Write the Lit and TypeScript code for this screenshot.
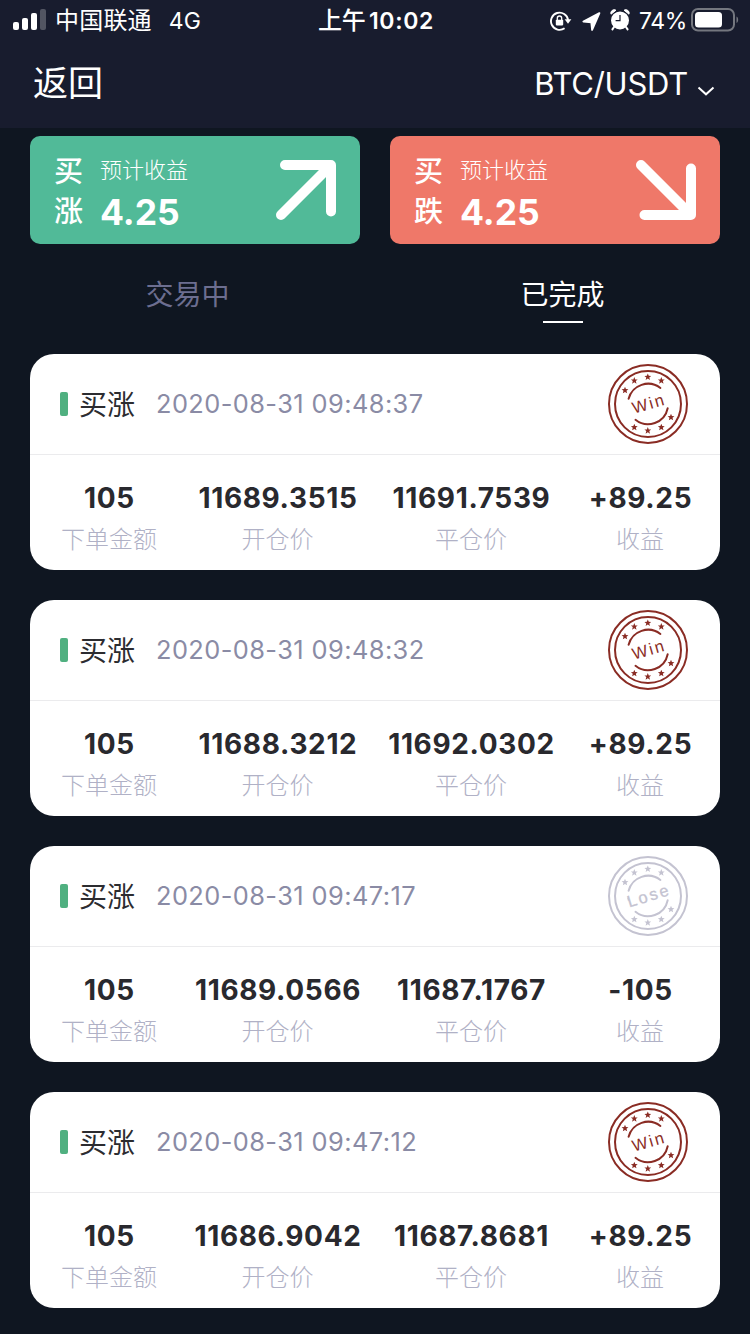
import { LitElement, css, html, svg } from 'lit'

type Result = 'win' | 'lose'

interface Order {
  time: string
  amount: string
  open: string
  close: string
  profit: string
  result: Result
}

const ORDERS: Order[] = [
  { time: '2020-08-31 09:48:37', amount: '105', open: '11689.3515', close: '11691.7539', profit: '+89.25', result: 'win' },
  { time: '2020-08-31 09:48:32', amount: '105', open: '11688.3212', close: '11692.0302', profit: '+89.25', result: 'win' },
  { time: '2020-08-31 09:47:17', amount: '105', open: '11689.0566', close: '11687.1767', profit: '-105', result: 'lose' },
  { time: '2020-08-31 09:47:12', amount: '105', open: '11686.9042', close: '11687.8681', profit: '+89.25', result: 'win' },
]

const STARS = [
  [17, 26.3], [26.3, 16.7], [39.8, 13], [53.3, 16.7],
  [26.3, 63.3], [39.8, 66.7], [53.3, 63.3], [63, 53.3],
]

class StatusBar extends LitElement {
  static styles = css`
    :host {
      display: grid;
      grid-template-columns: 1fr auto 1fr;
      align-items: center;
      height: 40px;
      padding: 0 11px 0 13px;
      font-size: 23px;
      line-height: 42px;
    }

    svg {
      display: block;
      flex: none;
    }

    .left,
    .right {
      display: flex;
      align-items: center;
      height: 40px;
    }

    .left svg {
      margin-bottom: 2px;
    }

    .carrier {
      margin-left: 9px;
      font-size: 24px;
      letter-spacing: 0.2px;
    }

    .network {
      margin-left: 17px;
    }

    .time {
      font-weight: 600;
      letter-spacing: 0.7px;
      white-space: nowrap;
    }

    .time .cjk {
      font-size: 24px;
      font-weight: 500;
      letter-spacing: 0;
      margin-right: 3px;
    }

    .right {
      justify-content: flex-end;
    }

    .lock {
      margin-right: 10px;
    }

    .arrow {
      margin: 1px 9px 0 0;
    }

    .alarm {
      margin: 0 9px 2px 0;
    }

    .percent {
      margin-right: 4px;
      letter-spacing: -0.4px;
    }

    .battery {
      margin-bottom: 2px;
    }
  `

  render() {
    return html`
      <div class="left">
        <svg width="33" height="22" viewBox="0 0 33 22" fill="#fff">
          <rect x="0" y="13" width="6" height="8" rx="2" />
          <rect x="9" y="9" width="6" height="12" rx="2" />
          <rect x="18" y="4" width="6" height="17" rx="2" />
          <rect x="27" y="0" width="6" height="21" rx="2" opacity="0.25" />
        </svg>
        <span class="carrier">中国联通</span>
        <span class="network">4G</span>
      </div>
      <div class="time"><span class="cjk">上午</span>10:02</div>
      <div class="right">
        <svg class="lock" width="22" height="20" viewBox="0 0 22 20">
          <path d="M14.6 17.2A8.6 8.6 0 1 1 18.1 9" fill="none" stroke="#fff" stroke-width="1.9" />
          <path d="M14.6 8.2h6.8l-3.4 4.6z" fill="#fff" />
          <rect x="5.8" y="8.8" width="7.4" height="5.6" rx="0.8" fill="#fff" />
          <path d="M7.3 9V7.2a2.2 2.2 0 0 1 4.4 0V9" fill="none" stroke="#fff" stroke-width="1.3" />
        </svg>
        <svg class="arrow" width="19" height="19" viewBox="0 0 19 19">
          <path d="M17.4 1.2L1.4 9.6l7.9.6.8 7.6z" fill="#fff" stroke="#fff" stroke-width="1.9" stroke-linejoin="round" />
        </svg>
        <svg class="alarm" width="20" height="22" viewBox="0 0 20 22">
          <circle cx="10" cy="11.4" r="9" fill="#fff" />
          <path d="M1 5.2A3.4 3.4 0 0 1 6 1.2zM19 5.2a3.4 3.4 0 0 0-5-4z" fill="#fff" stroke="#fff" stroke-linejoin="round" />
          <path d="M4 18l-1.6 2.4M16 18l1.6 2.4" stroke="#fff" stroke-width="2" stroke-linecap="round" />
          <path d="M10 6v5.6H5.6" fill="none" stroke="#181c2e" stroke-width="1.2" />
        </svg>
        <span class="percent">74%</span>
        <svg class="battery" width="48" height="24" viewBox="0 0 48 24">
          <rect x="1" y="1" width="42" height="21.5" rx="6" fill="none" stroke="#74777f" stroke-width="2" />
          <rect x="4" y="4" width="27" height="15.5" rx="3.5" fill="#fff" />
          <path d="M45.5 8.5c2.2 1.2 2.2 5.4 0 6.6z" fill="#74777f" />
        </svg>
      </div>
    `
  }
}

class ResultStamp extends LitElement {
  static properties = {
    result: {},
  }

  declare result: Result

  static styles = css`
    :host {
      display: block;
      width: 80px;
      height: 80px;
      color: #8a2c24;
    }

    :host([result='lose']) {
      color: #c4c3d1;
    }

    svg {
      display: block;
    }

    text {
      font-family: "Liberation Sans", Inter, sans-serif;
      text-anchor: middle;
      fill: currentColor;
    }

    .win {
      font-size: 16.5px;
      letter-spacing: 1.9px;
    }

    .lose {
      font-size: 16.5px;
      letter-spacing: 2.2px;
      stroke: currentColor;
      stroke-width: 0.3px;
    }
  `

  render() {
    const isWin = this.result === 'win'
    return html`
      <svg width="80" height="80" viewBox="0 0 80 80">
        <g fill="none" stroke="currentColor" stroke-width="2">
          <circle cx="40" cy="40" r="39" />
          <circle cx="40" cy="40" r="33" />
          <path d="M20.6 34.8A20.1 20.1 0 0 1 52.4 24" stroke-linecap="round" />
          <path d="M27.5 55.8A20.1 20.1 0 0 0 59.7 44.2" stroke-linecap="round" />
          ${isWin ? '' : svg`<path d="M20 41.5l.6 3" stroke-width="1.4" />`}
        </g>
        ${STARS.map(([x, y]) => svg`
          <path
            transform="translate(${x} ${y})"
            d="M0-3.6L.95-1.2 3.4-1.1 1.5.4 2.2 3 0 1.6-2.2 3-1.5.4-3.4-1.1-.95-1.2z"
            fill="currentColor"
          />
        `)}
        ${isWin
          ? svg`<text class="win" x="41" y="45.5" transform="rotate(-16 40 40)">Win</text>`
          : svg`<text class="lose" x="41" y="45.5" transform="rotate(-17 40 40)">Lose</text>`}
      </svg>
    `
  }
}

class OrderCard extends LitElement {
  static properties = {
    order: { attribute: false },
  }

  declare order: Order

  static styles = css`
    :host {
      display: block;
      height: 216px;
      border-radius: 24px;
      background: #fff;
      overflow: hidden;
    }

    .head {
      display: flex;
      align-items: center;
      box-sizing: border-box;
      height: 101px;
      padding: 0 32px 0 30px;
      border-bottom: 1px solid #ebebed;
    }

    .mark {
      width: 8px;
      height: 24px;
      border-radius: 2px;
      background: #50b080;
    }

    .side {
      margin: -2px 0 0 11px;
      font-size: 28px;
      color: #2c2c30;
    }

    .date {
      flex: 1;
      margin: -2px 0 0 21px;
      font-size: 25.4px;
      letter-spacing: 0.42px;
      color: #8a8ba5;
    }

    .figures {
      display: grid;
      grid-template-columns: 159px 178px 209px 129px;
      padding-top: 23px;
      text-align: center;
    }

    .value {
      font-size: 28px;
      line-height: 40px;
      font-weight: 700;
      letter-spacing: 0.65px;
      color: #29292e;
    }

    .label {
      margin: 4px 1px 0 0;
      font-size: 24px;
      line-height: 36px;
      font-weight: 300;
      color: #b0b1c6;
    }
  `

  private figure(value: string, label: string) {
    return html`
      <div>
        <div class="value">${value}</div>
        <div class="label">${label}</div>
      </div>
    `
  }

  render() {
    const { time, amount, open, close, profit, result } = this.order
    return html`
      <div class="head">
        <span class="mark"></span>
        <span class="side">买涨</span>
        <span class="date">${time}</span>
        <result-stamp result=${result}></result-stamp>
      </div>
      <div class="figures">
        ${this.figure(amount, '下单金额')}
        ${this.figure(open, '开仓价')}
        ${this.figure(close, '平仓价')}
        ${this.figure(profit, '收益')}
      </div>
    `
  }
}

class AppRoot extends LitElement {
  static styles = css`
    :host {
      display: block;
      height: 1334px;
      overflow: hidden;
      background: #0f1621;
      color: #fff;
      font-family: Inter, "Noto Sans CJK SC", sans-serif;
    }

    .top {
      height: 128px;
      background: #181c2e;
    }

    .nav {
      display: flex;
      justify-content: space-between;
      align-items: center;
      height: 86px;
      padding: 0 35px 0 33px;
    }

    .back {
      margin-top: -6px;
      font-size: 35px;
    }

    .pair {
      display: flex;
      align-items: center;
      font-size: 31px;
      letter-spacing: -0.25px;
    }

    .pair svg {
      margin: 15px 0 0 9px;
    }

    .bets {
      display: flex;
      gap: 30px;
      padding: 8px 30px 0;
    }

    .bet {
      flex: 1;
      display: flex;
      box-sizing: border-box;
      height: 108px;
      padding: 14px 21px 0 24px;
      border-radius: 10px;
    }

    .up {
      background: #51ba98;
    }

    .down {
      background: #ef7869;
    }

    .name {
      width: 30px;
      padding-top: 2px;
      font-size: 29px;
      line-height: 40px;
      font-weight: 500;
    }

    .gain {
      flex: 1;
      margin-left: 16px;
    }

    .caption {
      font-size: 22px;
      line-height: 41px;
      font-weight: 300;
    }

    .number {
      font-size: 35.5px;
      line-height: 44px;
      font-weight: 700;
    }

    .bet svg {
      margin-top: 7px;
    }

    .tabs {
      display: flex;
      height: 110px;
    }

    .tab {
      flex: 1;
      display: flex;
      flex-direction: column;
      align-items: center;
      padding-top: 31px;
      font-size: 28px;
      line-height: 40px;
      color: #6c6e90;
    }

    .active {
      color: #fff;
    }

    .active::after {
      content: '';
      width: 40px;
      height: 2px;
      margin-top: 6px;
      background: #fff;
    }

    .orders {
      display: flex;
      flex-direction: column;
      gap: 30px;
      padding: 0 30px;
    }
  `

  private bet(kind: 'up' | 'down', name: string, path: string) {
    return html`
      <div class="bet ${kind}">
        <div class="name">${name}</div>
        <div class="gain">
          <div class="caption">预计收益</div>
          <div class="number">4.25</div>
        </div>
        <svg width="66" height="66" viewBox="0 0 66 66">
          <path d=${path} fill="none" stroke="#fff" stroke-width="10" stroke-linecap="round" stroke-linejoin="round" />
        </svg>
      </div>
    `
  }

  render() {
    return html`
      <div class="top">
        <status-bar></status-bar>
        <div class="nav">
          <span class="back">返回</span>
          <span class="pair">
            BTC/USDT
            <svg width="18" height="10" viewBox="0 0 18 10">
              <path d="M1.5 1.5L9 8.3l7.5-6.8" fill="none" stroke="#fff" stroke-width="2" />
            </svg>
          </span>
        </div>
      </div>
      <div class="bets">
        ${this.bet('up', '买涨', 'M12 8H58V54.5M58 8L8 58')}
        ${this.bet('down', '买跌', 'M8 8L58 58M58 11.5V58H11.5')}
      </div>
      <div class="tabs">
        <div class="tab">交易中</div>
        <div class="tab active">已完成</div>
      </div>
      <div class="orders">
        ${ORDERS.map((order) => html`<order-card .order=${order}></order-card>`)}
      </div>
    `
  }
}

customElements.define('status-bar', StatusBar)
customElements.define('result-stamp', ResultStamp)
customElements.define('order-card', OrderCard)
customElements.define('app-root', AppRoot)
